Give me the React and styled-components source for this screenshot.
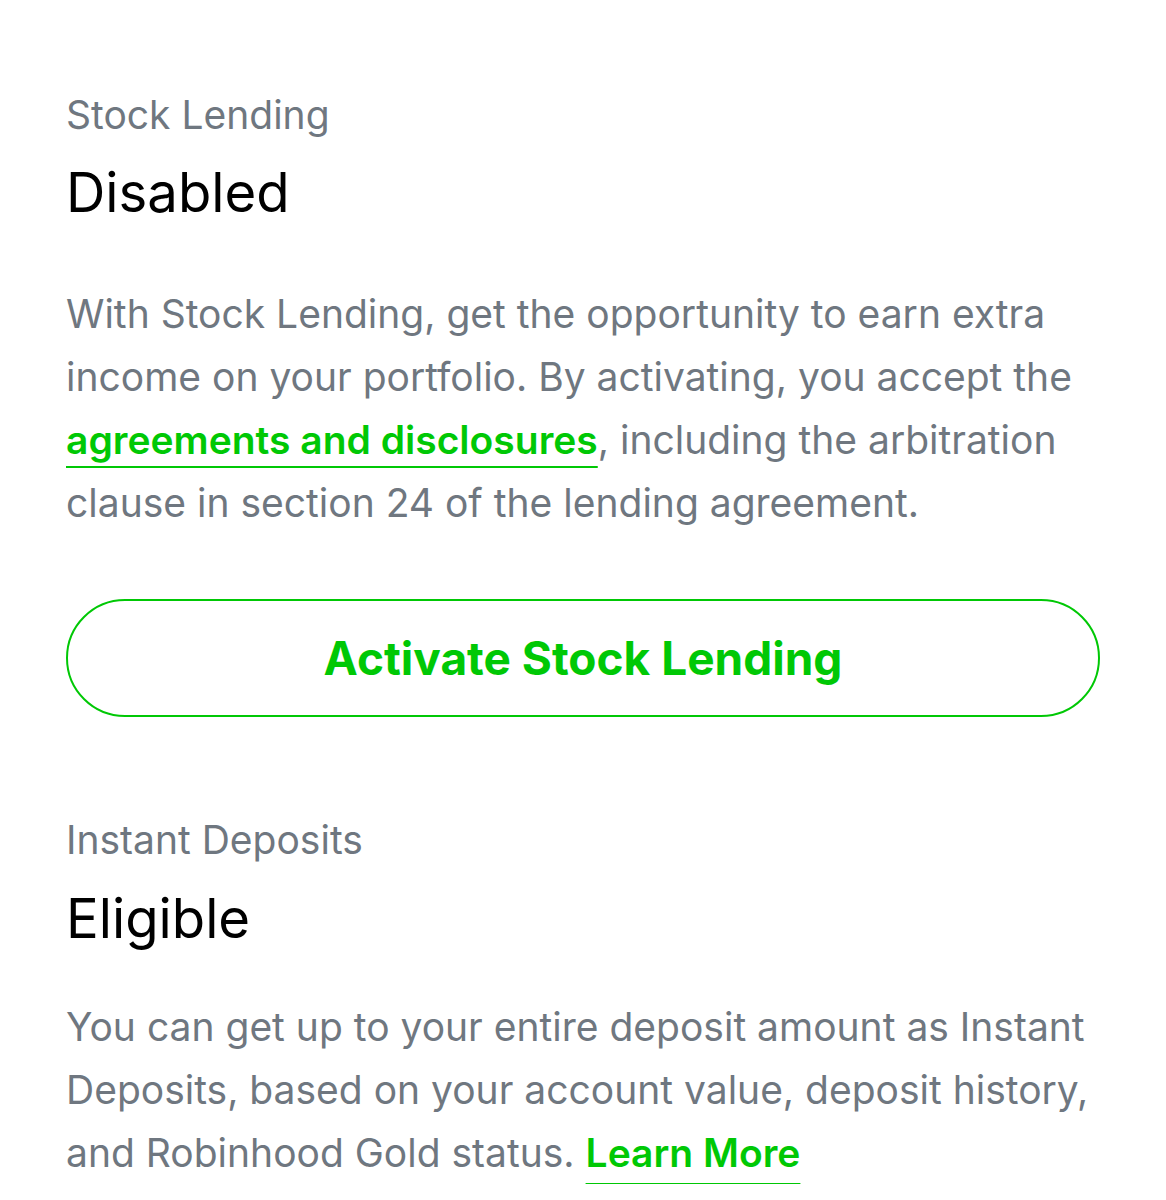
import React from 'react';
import styled, { createGlobalStyle } from 'styled-components';

const GlobalStyle = createGlobalStyle`
  body {
    margin: 0;
    background: #ffffff;
    font-family: Inter, 'Noto Sans', sans-serif;
    -webkit-font-smoothing: antialiased;
  }
`;

const green = '#00c805';
const gray = '#6f7780';

const Page = styled.div`
  padding: 88px 66px 0 66px;
  display: flex;
  flex-direction: column;
`;

const Section = styled.section`
  display: flex;
  flex-direction: column;
  margin-bottom: ${(p) => p.$gap || 0}px;
`;

const Label = styled.div`
  font-size: 39px;
  line-height: 54px;
  color: ${gray};
`;

const Status = styled.div`
  font-size: 54.5px;
  line-height: 64px;
  color: #000;
  margin-top: ${(p) => p.$top || 18}px;
`;

const Body = styled.p`
  margin: ${(p) => p.$top}px 0 0 0;
  font-size: 39px;
  line-height: 63px;
  color: ${gray};
`;

const Link = styled.a`
  color: ${green};
  font-weight: 600;
  text-decoration: underline 2px ${green};
  text-underline-offset: ${(p) => p.$offset || 12}px;
  cursor: pointer;
`;

const OutlineButton = styled.button`
  margin-top: 65px;
  height: 118px;
  width: 100%;
  border: 2px solid ${green};
  border-radius: 59px;
  background: transparent;
  color: ${green};
  font-family: inherit;
  font-size: 46px;
  font-weight: 700;
`;

export default function App() {
  return (
    <Page>
      <GlobalStyle />
      <Section $gap={96}>
        <Label>Stock Lending</Label>
        <Status>Disabled</Status>
        <Body $top={58}>
          With Stock Lending, get the opportunity to earn extra income on your portfolio. By
          activating, you accept the <Link>agreements and disclosures</Link>, including the
          arbitration clause in section 24 of the lending agreement.
        </Body>
        <OutlineButton>Activate Stock Lending</OutlineButton>
      </Section>
      <Section>
        <Label>Instant Deposits</Label>
        <Status $top={19}>Eligible</Status>
        <Body $top={45}>
          You can get up to your entire deposit amount as Instant Deposits, based on your
          account value, deposit history, and Robinhood Gold status.{' '}
          <Link $offset={16}>Learn More</Link>
        </Body>
      </Section>
    </Page>
  );
}
